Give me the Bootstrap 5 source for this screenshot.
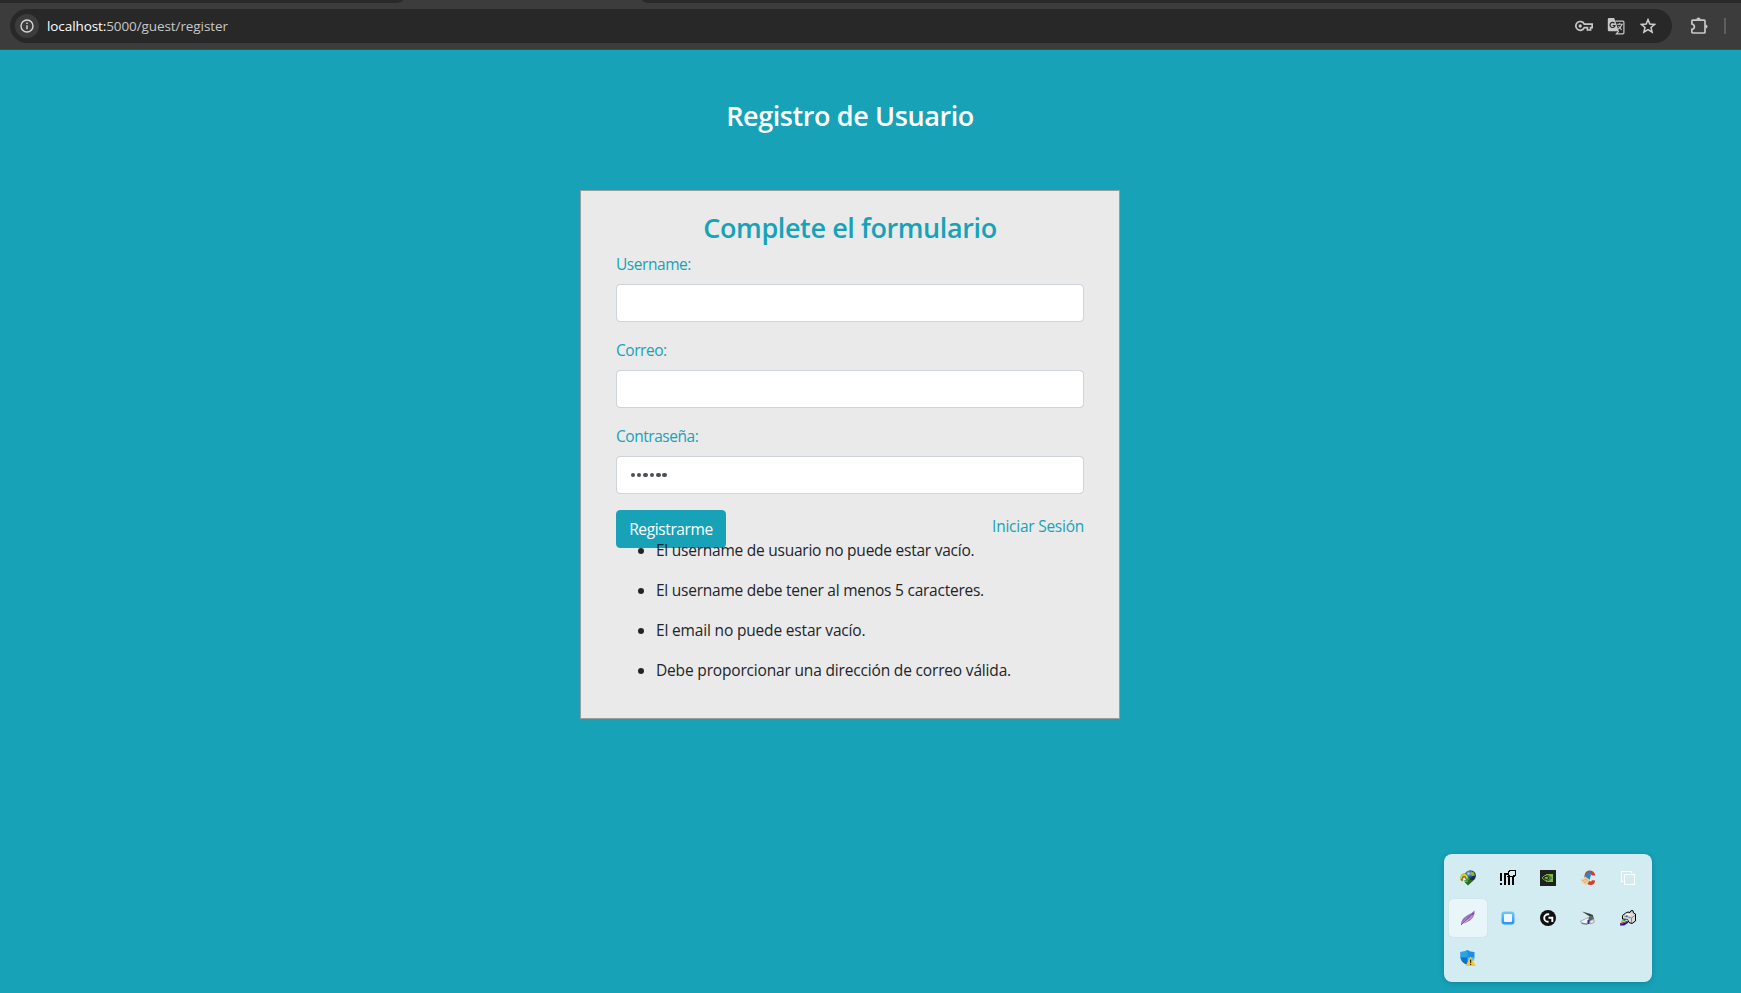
<!DOCTYPE html>
<html lang="es">
<head>
<meta charset="utf-8">
<title>Registro de Usuario</title>
<link rel="stylesheet" href="https://cdn.jsdelivr.net/npm/bootstrap@5.3.0/dist/css/bootstrap.min.css">
<script src="https://cdn.jsdelivr.net/npm/bootstrap@5.3.0/dist/js/bootstrap.bundle.min.js"></script>
<style>
  :root { --teal: #17a2b8; }
  body { font-family: "Open Sans", "Noto Sans", sans-serif; font-size: 15.5px; line-height: 24px; height: 993px; background: var(--teal); letter-spacing: -.17px; overflow: hidden; }
  .tabstrip { height: 3px; background: #3c3c3c; }
  .tabs-left { width: 403px; background: #292929; border-bottom-right-radius: 8px 3px; }
  .tabs-right { width: 1099px; background: #292929; border-bottom-left-radius: 8px 3px; }
  .toolbar { height: 47px; background: #3c3c3c; padding: 6px 0 7px 10px; border-bottom: 1px solid #46494a; }
  .omnibox { width: 1662px; height: 34px; border-radius: 17px; background: #282828; padding-left: 5px; padding-right: 17px; }
  .info-dot { width: 24px; height: 24px; border-radius: 50%; background: #3c3c3c; }
  .url { font-size: 13.5px; margin-left: 8px; color: #c7c7c7; letter-spacing: -.09px; }
  .url span { color: #fff; }
  .toolbar svg { display: block; }
  .sep { width: 2px; height: 16px; background: #5e5e5e; }
  .page-area { width: 1700px; padding-top: 49px; }
  .heading { font-size: 27px; line-height: 34px; font-weight: 600; letter-spacing: -.4px; margin: 0; }
  .login-box { width: 540px; height: 529px; margin: 57px auto 0; background: #eaeaea; border: 1px solid #9c9c9c; padding: 20px 35px; }
  .login-box .heading { color: var(--teal); margin-bottom: 7px; }
  .login-box label { display: block; color: var(--teal); margin-bottom: 8px; letter-spacing: -.45px; }
  .login-box .form-control { height: 38px; border: 1px solid #ced4da; border-radius: 4px; padding: 6px 12px; margin-bottom: 16px; color: #495057; }
  .login-box .dots { display: flex; align-items: center; gap: 1.9px; padding-left: 13.5px; }
  .dots i { width: 4.5px; height: 4.5px; border-radius: 50%; background: #495057; }
  .actions { height: 28px; }
  .btn-teal, .btn-teal:hover { width: 110px; height: 38px; padding: 6px 0; background: var(--teal); color: #fff; border: 1px solid var(--teal); border-radius: 4px; font-size: 15.5px; line-height: 24px; letter-spacing: -.38px; }
  .login-link { color: var(--teal); text-decoration: none; margin-top: 4px; letter-spacing: -.25px; }
  .errors { padding-left: 40px; margin: 0; }
  .errors li { margin-bottom: 16px; }
  .errors .tight { letter-spacing: -.24px; }
  .tray { position: absolute; left: 1444px; top: 854px; width: 208px; height: 128px; padding: 4px; border-radius: 8px; background: #d3ecf2; box-shadow: 0 1px 5px rgba(0,60,80,.3); display: grid; grid-template-columns: repeat(5, 40px); grid-template-rows: repeat(3, 40px); }
  .cell { display: flex; align-items: center; justify-content: center; }
  .cell.picked { background: #e8f5f9; border-radius: 4px; margin: 1px; box-shadow: 0 0 1px #a9c7ce; }
</style>
</head>
<body>
<header>
  <div class="tabstrip d-flex justify-content-between"><div class="tabs-left"></div><div class="tabs-right"></div></div>
  <div class="toolbar d-flex align-items-center">
    <div class="omnibox d-flex align-items-center">
      <div class="info-dot d-flex align-items-center justify-content-center">
        <svg width="14" height="14" viewBox="0 0 14 14" fill="none" stroke="#d6d6d6" stroke-width="1.4"><circle cx="7" cy="7" r="6"/><path d="M7 6.2v4M7 3.6v1.4"/></svg>
      </div>
      <div class="url"><span>localhost:</span>5000/guest/register</div>
      <svg class="ms-auto" width="18" height="12" viewBox="0 0 18 12" fill="none" stroke="#c7c7c7" stroke-width="1.7"><path d="M9.3 4.2H17.2V7.6H15.6V10H12.4V7.6H9.3A4.4 4.4 0 1 1 9.3 4.2Z"/><circle cx="5.2" cy="6" r="1.7" fill="#c7c7c7" stroke="none"/></svg>
      <svg style="margin-left:14px" width="18" height="18" viewBox="0 0 18 18"><path d="M2 1h5.2l4.6 13.3H2A1.3 1.3 0 0 1 .8 13V2.200A1.200 1.200 0 0 1 2 1Z" fill="#c7c7c7"/><path d="M7.500 6.400A2.500 2.500 0 1 0 8 8.500H5.600" fill="none" stroke="#282828" stroke-width="1.200"/><path d="M8.300 4.200h7.600a1 1 0 0 1 1 1v10.600a1 1 0 0 1-1 1H9.400l2.300-2.600" fill="none" stroke="#c7c7c7" stroke-width="1.200"/><path d="M9.800 7.300h6M12.700 6v1.300M14.800 7.600c-.4 2-2 3.400-3.800 4.600M11.300 9l3.300 3.800" fill="none" stroke="#c7c7c7" stroke-width="1.100"/></svg>
      <svg style="margin-left:15px;margin-right:-1px" width="16" height="16" viewBox="0 0 16 16" fill="none" stroke="#d0d0d0" stroke-width="1.500"><path d="M8 1.600 9.800 6l4.800.4L11 9.500l1.100 4.700L8 11.700l-4.100 2.500L5 9.500 1.400 6.400 6.200 6Z"/></svg>
    </div>
    <svg style="margin-left:18px" width="20" height="20" viewBox="0 0 20 20"><path d="M2.700 4.200H14.200a.8.8 0 0 1 .8.8V16.200a.8.8 0 0 1-.8.8H2.700a.8.8 0 0 1-.8-.8V13.300q2.500-.5 2.500-2.600T1.900 8V5a.8.8 0 0 1 .8-.8Z" fill="none" stroke="#c7c7c7" stroke-width="1.700"/><path d="M6.300 3.700a2.200 2.200 0 0 1 4.400 0ZM15.500 8.500a2 2 0 0 1 0 4Z" fill="#c7c7c7"/></svg>
    <div class="sep" style="margin-left:14px"></div>
  </div>
</header>

<main class="page-area">
  <h3 class="heading text-center text-white">Registro de Usuario</h3>
  <form class="login-box">
    <h3 class="heading text-center">Complete el formulario</h3>
    <label>Username:</label>
    <input type="text" class="form-control">
    <label>Correo:</label>
    <input type="text" class="form-control">
    <label>Contraseña:</label>
    <div class="form-control dots"><i></i><i></i><i></i><i></i><i></i><i></i></div>
    <div class="actions d-flex justify-content-between align-items-start">
      <button type="button" class="btn btn-teal">Registrarme</button>
      <a class="login-link" href="#">Iniciar Sesión</a>
    </div>
    <ul class="errors">
      <li class="tight">El username de usuario no puede estar vacío.</li>
      <li class="tight">El username debe tener al menos 5 caracteres.</li>
      <li>El email no puede estar vacío.</li>
      <li>Debe proporcionar una dirección de correo válida.</li>
    </ul>
  </form>
</main>

<aside class="tray">
  <div class="cell"><svg width="16" height="16" viewBox="0 0 16 16"><defs><radialGradient id="g1" cx=".35" cy=".3"><stop offset="0" stop-color="#c9def5"/><stop offset=".4" stop-color="#4a78b8"/><stop offset="1" stop-color="#122c55"/></radialGradient></defs><circle cx="10.300" cy="5.800" r="5.600" fill="url(#g1)"/><path d="M11 1.500l3 1 1 3-3 .5-2-2Z" fill="#8fb53a"/><path d="M.3 9Q0 3.500 4.500 3.500 8.500 4 8.500 8.500h2L7 12 3.500 10.500 6 10Q5.500 7 4 7.500 2.500 8 2.500 11.500.8 11 .3 9Z" fill="#35a52d"/><path d="M1 9Q1 4.700 4.500 4.700 7 5 7.300 8.500" fill="none" stroke="#f4d22c" stroke-width="1.400"/><path d="M2.200 10.500Q2 6.500 4.500 6.500" fill="none" stroke="#e5502c" stroke-width="1.200"/><path d="M4 11.500 8 15.500 13.500 10.500 10 9.500 7 12Z" fill="#2c6a24"/></svg></div>
  <div class="cell"><svg width="16" height="16" viewBox="0 0 16 16" shape-rendering="crispEdges"><path d="M0 3h2v8H0ZM0 13h2v2H0ZM4 5h2v10H4ZM4 3h4v2H4ZM8 6h2v9H8ZM12 7h2v8h-2ZM7 6h8v1H7Z" fill="#000"/><path d="M9.500 .5h6v5h-2v1h-4v-1h-1v-4h1Z" fill="#d3ecf2" stroke="#000"/></svg></div>
  <div class="cell"><svg width="16" height="16" viewBox="0 0 16 16"><path fill="#1e211e" d="M0 0h16v16H0Z"/><path fill="#76b947" d="M6 4h7v8H6Z"/><path d="M2 8Q6 2.500 10.500 8 6.500 13 2 8Z" fill="#1e211e" stroke="#76b947"/><path d="M4.300 8Q6.500 5.300 8.500 8 6.500 10.300 4.300 8Z" fill="#76b947"/><path d="M6 5.500Q9.500 5 11.500 8 9.500 10.500 7 11" fill="none" stroke="#1e211e" stroke-width=".7"/></svg></div>
  <div class="cell"><svg width="16" height="16" viewBox="0 0 16 16"><path d="M15.500 5.500Q14 .2 9 .5 4 1 4.500 8 5.500 15 10.500 15q4 0 4.700-4.500l-3.200-.3Q11.500 12 10 11.500 8 10 8.500 6 9.500 3 12 5.500Z" fill="#d63c27"/><path d="M10 1.500 6.500 7" stroke="#287fc1" stroke-width="2.500"/><path d="M7.500 2 4.500 7l5 3L11 5Z" fill="#3186b7"/><path d="M.5 9Q4 9 5 6.500l4.500 3Q9 13 6 15 2 14 .5 9Z" fill="#efd09b"/><path d="M2 11l5-2M4 13l4-3" stroke="#c99b66" stroke-width=".6"/></svg></div>
  <div class="cell"><svg width="16" height="16" viewBox="0 0 16 16" fill="none" stroke="#fff" shape-rendering="crispEdges"><path d="M4.500 4.500h10v10h-10ZM3 11.500H1.500v-10h10V3"/></svg></div>
  <div class="cell picked"><svg width="16" height="16" viewBox="0 0 16 16"><path d="M1 15.500Q.5 9.500 7 5.500 12.500 3 14.500 .5 15.500 6 10 10.500 6 13 2.500 13.500Z" fill="#9b6bc2"/><path d="M1 15Q5 8 12 5M4 12.500Q10 9.500 13 5.500" fill="none" stroke="#dcc6ea" stroke-width=".8"/><path d="M1 15Q6 8.500 14 3" fill="none" stroke="#64358b" stroke-width=".8"/></svg></div>
  <div class="cell"><svg width="16" height="16" viewBox="0 0 16 16"><defs><linearGradient id="g2" x2="0" y2="1"><stop stop-color="#76c6fb"/><stop offset="1" stop-color="#2493f5"/></linearGradient></defs><rect x="1.500" y="1.500" width="13" height="13" rx="3" fill="url(#g2)"/><rect x="4" y="4" width="8" height="8" rx="1" fill="#edf7ff"/></svg></div>
  <div class="cell"><svg width="16" height="16" viewBox="0 0 16 16"><circle cx="8" cy="8" r="8" fill="#111"/><path d="M9.200 4.200H8A3.800 3.800 0 0 0 8 11.800H8.500M8.500 7.700H12.300V12" fill="none" stroke="#fff" stroke-width="1.900"/></svg></div>
  <div class="cell"><svg width="16" height="16" viewBox="0 0 16 16"><path d="M2 1.500 9 3.500l4 1.500v2L9 6Z" fill="#34413e"/><path d="M9 6.500l4-1 1 3-4 3-2-1Z" fill="#5b6263"/><path d="M0 11.500l8-4 1 5-4 1.500Z" fill="#f0f2f4" stroke="#8e9699" stroke-width=".7"/><path d="M7.500 10H9.500v4h-2Z" fill="#26329a"/><path d="M10 10.500l4-1v3l-4 1.500Z" fill="#e8e8e8" stroke="#777" stroke-width=".6"/><path d="M1.500 13.500l6 .8" stroke="#555" stroke-width=".8"/></svg></div>
  <div class="cell"><svg width="16" height="16" viewBox="0 0 16 16"><path d="M2.500 9V5.500L5 3.500 8 2 10 2.500 11 .7h2L13.500 3l2 1v7L12 13.500 9 12.500 7.500 9.500Z" fill="#d9d9d9" stroke="#000"/><path d="M4 6l7.500 2L15 5.500M11.500 8v5" fill="none" stroke="#777" stroke-width=".8"/><path d="M5.500 4l5 1" stroke="#fff"/><path d="M6 6h1.500" stroke="#22c"/><path d="M1 11l6-2 1 1-6 2Z" fill="#0c3"/><path d="M0 12.500l8-2.500v1.500l-6 2.500Z" fill="#fff"/><path d="M0 13l8-2.500v1L0 14.500Z" fill="#e11"/><path d="M0 14.500l8-3v1.500l-4 2.500H0Z" fill="#1010c8"/></svg></div>
  <div class="cell"><svg width="16" height="16" viewBox="0 0 16 16"><path d="M7.500 0Q10 2 14.500 2v5q0 5-7 8-7-3-7-8V2Q5 2 7.500 0Z" fill="#1e8ee0"/><path d="M7.500 0v7.500h-7V2Q5 2 7.500 0Z" fill="#28a5ea"/><path d="M7.500 7.500h7q-.5 5-7 7.500Z" fill="#55c1f2"/><path d="M7.500 7.500V15q-6.500-2.500-7-7.500Z" fill="#1272c8"/><path d="M10.500 6.500 15.800 16H5.500Z" fill="#ffc629"/><path d="M10.600 9.500v3.300M10.600 13.700v1.200" stroke="#222" stroke-width="1.200"/></svg></div>
</aside>
</body>
</html>
